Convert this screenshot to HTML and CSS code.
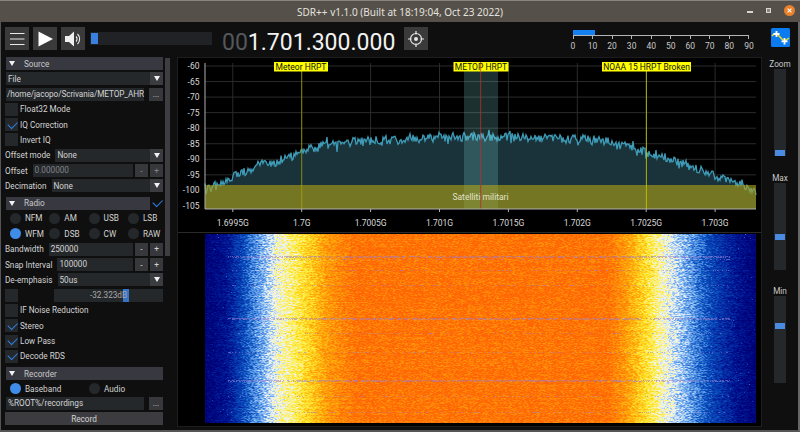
FILE: index.html
```html
<!DOCTYPE html>
<html lang="en">
<head>
<meta charset="utf-8">
<title>SDR++</title>
<link rel="stylesheet" href="styles.css">
</head>
<body>
<div class="window">
  <header class="titlebar">
    <span class="title">SDR++ v1.1.0 (Built at 18:19:04, Oct 23 2022)</span>
    <div class="winbtns">
      <span class="win-min"></span>
      <span class="win-max"></span>
      <span class="win-close"><svg viewBox="0 0 11 11" width="11" height="11"><path d="M3.6 3.6l3.8 3.8M7.4 3.6l-3.8 3.8" stroke="#fff" stroke-width="1.1"/></svg></span>
    </div>
  </header>
  <div class="toolbar">
    <button class="tbtn"><svg viewBox="0 0 24 24" width="24" height="24"><path d="M5 6.5h14.5M5 12h14.5M5 17.5h14.5" stroke="#e8e8e8" stroke-width="1.2" fill="none"/></svg></button>
    <button class="tbtn"><svg viewBox="0 0 24 24" width="24" height="24"><path d="M5.5 4.5L20 12 5.500 19.500Z" fill="#fff"/></svg></button>
    <button class="tbtn"><svg viewBox="0 0 24 24" width="24" height="24"><path d="M4 9h4l5-4.500v15L8 15H4Z" fill="#f0f0f0"/><path d="M15 9.500a3.500 3.500 0 0 1 0 5M16.500 7a7 7 0 0 1 0 10" stroke="#f0f0f0" stroke-width="1.100" fill="none"/></svg></button>
    <div class="volume"><span class="volume-grab"></span></div>
    <div class="freq"><span class="freq-dim">00</span>1.701.300.000</div>
    <button class="tbtn tune"><svg viewBox="0 0 24 24" width="24" height="24"><circle cx="12" cy="12" r="5.500" stroke="#e8e8e8" stroke-width="1.200" fill="none"/><circle cx="12" cy="12" r="2" fill="#e8e8e8"/><path d="M12 4v3.500M12 16.500V20M4 12h3.500M16.500 12H20" stroke="#e8e8e8" stroke-width="1.200"/></svg></button>
    <div class="meter">
      <div class="meter-bar"></div>
      <div class="scale">
        <div class="tick"><i></i><b>0</b></div>
        <div class="tick"><i></i><b>10</b></div>
        <div class="tick"><i></i><b>20</b></div>
        <div class="tick"><i></i><b>30</b></div>
        <div class="tick"><i></i><b>40</b></div>
        <div class="tick"><i></i><b>50</b></div>
        <div class="tick"><i></i><b>60</b></div>
        <div class="tick"><i></i><b>70</b></div>
        <div class="tick"><i></i><b>80</b></div>
        <div class="tick"><i></i><b>90</b></div>
      </div>
    </div>
    <div class="logo"><svg viewBox="0 0 19 19" width="19" height="19"><rect width="19" height="19" rx="1.500" fill="#0a7cf0"/><path d="M1 8c3-4 5-3 8 1s5 5 9 1" stroke="#f0d820" stroke-width="1.500" fill="none"/><path d="M5.500 3v6M2.500 6h6M13.500 10v6.500M10.500 13.300h6" stroke="#fff" stroke-width="1.800"/></svg></div>
  </div>
  <main class="main">
    <aside class="side">
      <div class="menu">
        <div class="head"><span class="tri"></span>Source</div>
        <div class="row"><div class="combo">File<span class="arrow"></span></div></div>
        <div class="row"><div class="input path">/home/jacopo/Scrivania/METOP_AHR</div><span class="btn dots">...</span></div>
        <div class="row"><span class="check"></span><span class="lbl">Float32 Mode</span></div>
        <div class="row"><span class="check on"></span><span class="lbl">IQ Correction</span></div>
        <div class="row"><span class="check"></span><span class="lbl">Invert IQ</span></div>
        <div class="row"><span class="key">Offset mode</span><div class="combo">None<span class="arrow"></span></div></div>
        <div class="row"><span class="key">Offset</span><div class="input dim">0.000000</div><span class="btn dim">-</span><span class="btn dim">+</span></div>
        <div class="row"><span class="key">Decimation</span><div class="combo">None<span class="arrow"></span></div></div>
        <div class="head radio-head"><div class="head-main"><span class="tri"></span>Radio</div><span class="check on bare"></span></div>
        <div class="radios">
          <span class="radio">NFM</span><span class="radio">AM</span><span class="radio">USB</span><span class="radio">LSB</span>
          <span class="radio on">WFM</span><span class="radio">DSB</span><span class="radio">CW</span><span class="radio">RAW</span>
        </div>
        <div class="row"><span class="key">Bandwidth</span><div class="input">250000</div><span class="btn">-</span><span class="btn">+</span></div>
        <div class="row"><span class="key">Snap Interval</span><div class="input">100000</div><span class="btn">-</span><span class="btn">+</span></div>
        <div class="row"><span class="key">De-emphasis</span><div class="combo">50us<span class="arrow"></span></div></div>
        <div class="row"><span class="check"></span><div class="squelch"><span class="squelch-text">-32.323dB</span><span class="squelch-grab"></span></div></div>
        <div class="row"><span class="check"></span><span class="lbl">IF Noise Reduction</span></div>
        <div class="row"><span class="check on"></span><span class="lbl">Stereo</span></div>
        <div class="row"><span class="check on"></span><span class="lbl">Low Pass</span></div>
        <div class="row"><span class="check on"></span><span class="lbl">Decode RDS</span></div>
        <div class="head sect"><span class="tri"></span>Recorder</div>
        <div class="radios two">
          <span class="radio on">Baseband</span><span class="radio">Audio</span>
        </div>
        <div class="row"><div class="input">%ROOT%/recordings</div><span class="btn dots">...</span></div>
        <div class="row"><span class="btn wide">Record</span></div>
      </div>
      <div class="scrollbar"><span class="thumb"></span></div>
    </aside>
    <section class="display">
      <svg id="spectrum" class="spectrum" viewBox="178 58 583 174" width="583" height="174"></svg>
      <div class="divider"></div>
      <div class="fall-wrap"><canvas id="fall" class="fall" width="551" height="189"></canvas></div>
    </section>
    <aside class="sliders">
      <div class="vs"><span class="vs-label">Zoom</span><div class="vs-track"><span class="vs-grab g-zoom"></span></div></div>
      <div class="vs"><span class="vs-label">Max</span><div class="vs-track"><span class="vs-grab g-max"></span></div></div>
      <div class="vs"><span class="vs-label">Min</span><div class="vs-track"><span class="vs-grab g-min"></span></div></div>
    </aside>
  </main>
</div>
<script src="script.js"></script>
</body>
</html>
```
FILE: styles.css
```css
* { box-sizing: border-box; }
html, body { margin: 0; padding: 0; background: #0f0f0f; }
body { width: 800px; height: 432px; overflow: hidden; font-family: Roboto, "Liberation Sans", sans-serif; font-size: 8.200px; color: #d4d4d4; }
.window { width: 800px; height: 432px; display: flex; flex-direction: column; background: #0f0f0f; border-left: 1px solid #555; border-right: 2px solid #666; border-bottom: 2px solid #555; }
.titlebar { height: 22px; flex: none; background: #55504a; border-top: 1px solid #8a8580; display: flex; align-items: center; justify-content: center; position: relative; margin: 0 -2px 0 -1px; }
.title { font-family: "Noto Sans", sans-serif; font-size: 10px; color: #e4e2df; }
.winbtns { position: absolute; right: 5px; top: 4px; display: flex; align-items: center; gap: 13px; }
.win-min { width: 6px; height: 1.500px; background: #d8d6d2; margin-top: 3px; }
.win-max { width: 5px; height: 5px; border: 1px solid #d8d6d2; background: #8a8680; }
.win-close { width: 11px; height: 11px; border-radius: 50%; background: #e8812c; display: flex; }
.toolbar { height: 34px; flex: none; display: flex; align-items: flex-start; padding: 5px 0 0 4px; }
.tbtn { width: 24px; height: 23px; padding: 0; margin: 0 4px 0 0; border: 0; background: #3a3a3a; display: flex; align-items: center; justify-content: center; }
.volume { width: 122px; height: 13px; margin: 5px 0 0 1px; background: #202226; }
.volume-grab { display: block; width: 7px; height: 11px; margin: 1px 0 0 1px; background: #3a80e0; }
.freq { width: 182px; margin: 2px 0 0 10px; font-size: 23px; line-height: 27px; color: #f2f2f2; white-space: nowrap; }
.freq-dim { color: #55585a; }
.tune { margin: 0; }
.meter { width: 176px; margin-left: 145px; position: relative; padding-top: 8px; }
.meter-bar { position: absolute; left: 0; top: 3px; width: 22px; height: 5px; background: #1580f0; }
.scale { display: flex; justify-content: space-between; border-top: 1px solid #b5b5b5; }
.tick { width: 0; display: flex; flex-direction: column; align-items: center; }
.tick i { width: 1px; height: 3px; flex: none; background: #b5b5b5; }
.tick b { font-weight: 400; font-size: 8.500px; line-height: 12px; margin-top: 1px; color: #c8c8c8; }
.logo { margin: 1px 0 0 22px; height: 19px; }
.main { flex: 1; min-height: 0; display: flex; padding-top: 1px; }
.side { width: 175px; flex: none; display: flex; padding-left: 4px; }
.menu { width: 158px; flex: none; display: flex; flex-direction: column; }
.row { height: 13px; margin-bottom: 2.300px; display: flex; align-items: center; gap: 2px; flex: none; white-space: nowrap; }
.head { height: 13px; margin-bottom: 2.300px; background: #383840; display: flex; align-items: center; flex: none; color: #c8c8c8; margin-left: 1px; }
.tri { width: 0; height: 0; border-left: 3.500px solid transparent; border-right: 3.500px solid transparent; border-top: 5px solid #f2f2f2; margin: 0 9px 0 3px; }
.radio-head { background: none; margin-top: 2.200px; }
.head-main { flex: 1; height: 13px; background: #383840; display: flex; align-items: center; }
.sect { margin-top: 2px; }
.combo { flex: 1; height: 13px; background: #25282b; display: flex; align-items: center; justify-content: space-between; padding-left: 2px; margin-left: 1px; }
.arrow { width: 13px; height: 13px; background: #3a3c40; position: relative; display: flex; align-items: center; justify-content: center; }
.arrow::after { content: ""; border-left: 3.500px solid transparent; border-right: 3.500px solid transparent; border-top: 5px solid #f2f2f2; }
.input { flex: 1; min-width: 0; height: 13px; background: #25282b; padding-left: 2px; margin-left: 1px; line-height: 13px; overflow: hidden; }
.path { letter-spacing: -0.080px; padding-left: 1px; }
.dim { color: #808488; }
.btn { width: 13px; height: 13px; background: #36383c; display: flex; align-items: center; justify-content: center; flex: none; }
.dots { margin-left: 3px; width: 14px; }
.wide { width: 100%; background: #3c3c40; }
.check { width: 13px; height: 13px; background: #25282b; flex: none; position: relative; }
.bare { background: none; margin-left: 0; }
.on.check::after { content: ""; position: absolute; left: 2.500px; top: 2.500px; width: 8px; height: 4.500px; border-left: 1.700px solid #2e82e8; border-bottom: 1.700px solid #2e82e8; transform: rotate(-45deg); }
.lbl { margin-left: 0; }
.key { flex: none; margin-right: 2px; }
.radios { display: grid; grid-template-columns: repeat(4, 39.300px); padding-left: 5px; row-gap: 2.600px; margin-bottom: 3px; }
.two { grid-template-columns: 79px 79px; margin-bottom: 2px; }
.radio { height: 12.500px; display: flex; align-items: center; gap: 4px; }
.radio::before { content: ""; width: 11px; height: 11px; border-radius: 50%; background: #25282b; flex: none; }
.radio.on::before { background: #3f8ce8; }
.squelch { flex: 1; height: 13px; margin-left: 34px; background: #25282b; position: relative; display: flex; justify-content: center; line-height: 13px; color: #a8a8a8; }
.squelch-grab { position: absolute; left: 69px; top: 0; width: 6px; height: 13px; background: #3a80e0; opacity: .85; }
.squelch-text { position: relative; z-index: 1; }
.scrollbar { width: 6px; margin: 1px 0 0 2px; height: 198px; flex: none; }
.thumb { display: block; width: 5px; height: 198px; background: #3e3e42; }
.display { width: 585px; height: 370px; flex: none; background: #000; border: 1px solid #1d1d1d; margin-left: 1px; display: flex; flex-direction: column; }
.spectrum { display: block; flex: none; }
.spectrum text { font-family: Roboto, "Liberation Sans", sans-serif; font-size: 8.500px; fill: #d8d8d8; }
.spectrum .mark { fill: #111; font-size: 8.500px; }
.divider { height: 1px; flex: none; background: #2a2a2a; margin-bottom: 1px; }
.fall-wrap { padding-left: 27px; flex: 1; }
.fall { display: block; }
.sliders { flex: 1; display: flex; flex-direction: column; align-items: center; padding-top: 0; }
.vs { display: flex; flex-direction: column; align-items: center; height: 113.500px; }
.vs-label { line-height: 12px; color: #c8c8c8; height: 12px; margin-top: 1px; margin-bottom: -1px; }
.vs-track { width: 12px; height: 87px; margin-top: 0; background: #25282b; position: relative; }
.vs-grab { position: absolute; left: 1px; width: 10px; height: 6px; background: #4a8ae0; }
.g-zoom { top: 81px; }
.g-max { top: 51px; }
.g-min { top: 27px; }
```
FILE: script.js
```js
(function () {
  var seed = 12345;
  function rnd() { seed = (seed * 1664525 + 1013904223) >>> 0; return seed / 4294967296; }
  function lerp(tbl, x) {
    for (var i = 1; i < tbl.length; i++) {
      if (x <= tbl[i][0]) {
        var a = tbl[i - 1], b = tbl[i];
        return a[1] + (b[1] - a[1]) * (x - a[0]) / (b[0] - a[0]);
      }
    }
    return tbl[tbl.length - 1][1];
  }
  var NS = "http://www.w3.org/2000/svg";
  var svg = document.getElementById("spectrum");
  function el(name, attrs, text) {
    var e = document.createElementNS(NS, name);
    for (var k in attrs) e.setAttribute(k, attrs[k]);
    if (text) e.textContent = text;
    svg.appendChild(e);
    return e;
  }
  var L = 205, R = 756, T = 63, B = 209;
  var dbs = [-60, -65, -70, -75, -80, -85, -90, -95, -100, -105];
  dbs.forEach(function (d, i) {
    var y = 66 + i * 15.55;
    el("line", { x1: L, x2: R, y1: y, y2: y, stroke: "#2b2b2b" });
    el("text", { x: 199.5, y: y + 3, "text-anchor": "end" }, String(d));
  });
  var xs = ["1.6995G", "1.7G", "1.7005G", "1.701G", "1.7015G", "1.702G", "1.7025G", "1.703G"];
  xs.forEach(function (s, i) {
    var x = 232.8 + i * 68.9;
    el("line", { x1: x, x2: x, y1: T, y2: B, stroke: "#2b2b2b" });
    el("line", { x1: x, x2: x, y1: B, y2: B + 3, stroke: "#b0b0b0" });
    el("text", { x: x, y: 226, "text-anchor": "middle" }, s);
  });

  var env = [[205, 191], [215, 186], [230, 178], [245, 171], [260, 165], [275, 162], [290, 157], [310, 149], [330, 144], [350, 142], [370, 141], [440, 137], [480, 137], [540, 138], [600, 140], [620, 145], [646, 152], [665, 157], [680, 162], [700, 170], [720, 177], [740, 183], [750, 189], [756, 193]];
  var pts = [];
  for (var x = L; x <= R; x += 1) {
    var y = lerp(env, x) + (rnd() - 0.5) * 9;
    if (rnd() < 0.07) y -= 4 * rnd() + 1;
    if (rnd() < 0.05) y += 4 * rnd() + 1;
    pts.push(x + " " + y.toFixed(1));
  }
  el("path", { d: "M" + L + " " + B + "L" + pts.join("L") + "L" + R + " " + B + "Z", fill: "#1a3239" });
  el("path", { d: "M" + pts.join("L"), fill: "none", stroke: "#3f9cb8", "stroke-width": 1.3 });
  el("rect", { x: 464, y: T, width: 34, height: B - T, fill: "#7fdcdc", "fill-opacity": 0.22 });
  el("rect", { x: L, y: 185, width: R - L, height: B - 185, fill: "#ac9f18", "fill-opacity": 0.62 });
  el("line", { x1: 301.7, x2: 301.7, y1: 71, y2: B, stroke: "#a8a800", "stroke-opacity": 0.75 });
  el("line", { x1: 646.4, x2: 646.4, y1: 71, y2: B, stroke: "#c8c800", "stroke-opacity": 0.85 });
  el("line", { x1: 480.7, x2: 480.7, y1: T, y2: B, stroke: "#b03030", "stroke-opacity": 0.85 });
  el("line", { x1: L, x2: L, y1: T, y2: B, stroke: "#b0b0b0" });
  el("line", { x1: L, x2: R, y1: B, y2: B, stroke: "#b0b0b0" });
  [["Meteor HRPT", 274, 54], ["METOP HRPT", 453.500, 55], ["NOAA 15 HRPT Broken", 602, 89]].forEach(function (m) {
    el("rect", { x: m[1], y: 62, width: m[2], height: 9.500, fill: "#ffff00" });
    el("text", { x: m[1] + m[2] / 2, y: 69.800, "text-anchor": "middle", "class": "mark" }, m[0]);
  });
  el("line", { x1: 480.7, x2: 480.7, y1: 62, y2: 71.500, stroke: "#b03030", "stroke-opacity": 0.7 });
  el("text", { x: 480.5, y: 200, "text-anchor": "middle", style: "fill:#e2e2c8" }, "Satelliti militari");

  // Waterfall
  var cv = document.getElementById("fall"), ctx = cv.getContext("2d");
  var W = cv.width, H = cv.height, img = ctx.createImageData(W, H);
  var lvl = [[0, 0.0], [20, 0.08], [32, 0.2], [45, 0.33], [60, 0.45], [72, 0.55], [90, 0.63], [105, 0.72], [122, 0.84], [150, 0.94], [402, 0.94], [420, 0.84], [438, 0.7], [458, 0.56], [482, 0.42], [510, 0.22], [533, 0.08], [551, 0.0]];
  var stops = [[0, 0, 0, 115], [0.12, 0, 20, 145], [0.3, 10, 80, 190], [0.44, 110, 170, 240], [0.55, 240, 245, 245], [0.68, 255, 235, 50], [0.82, 255, 170, 10], [1, 255, 100, 5]];
  function cmap(v) {
    v = Math.max(0, Math.min(1, v));
    for (var i = 1; i < stops.length; i++) {
      if (v <= stops[i][0]) {
        var a = stops[i - 1], b = stops[i], t = (v - a[0]) / (b[0] - a[0]);
        return [a[1] + (b[1] - a[1]) * t, a[2] + (b[2] - a[2]) * t, a[3] + (b[3] - a[3]) * t];
      }
    }
    return stops[stops.length - 1].slice(1);
  }
  var feature = {};
  [[22, 1], [23, 0.8], [25, 0.3], [36, 0.3], [51, 0.3], [84, 1], [85, 0.8], [99, 0.3], [118, 0.35], [146, 1], [147, 0.8], [162, 0.3], [178, 0.35]].forEach(function (f) { feature[f[0]] = f[1]; });
  for (var yy = 0; yy < H; yy++) {
    var rowShift = (rnd() - 0.5) * 0.03;
    var fs = feature[yy] || 0;
    var prev = 0;
    for (var xx = 0; xx < W; xx++) {
      var n = (rnd() - 0.5) * 0.2;
      var v = lerp(lvl, xx) + rowShift + (n + prev) * 0.5 + 0.02;
      prev = n;
      if (rnd() < 0.004 && v < 0.15) v += 0.2;
      var c = cmap(v);
      if (fs && xx > 22 && xx < 525 && rnd() < 0.65 * fs) {
        c = [c[0] * 0.45 + 85, c[1] * 0.45 + 70, c[2] * 0.45 + 115];
      }
      var p = (yy * W + xx) * 4;
      img.data[p] = c[0]; img.data[p + 1] = c[1]; img.data[p + 2] = c[2]; img.data[p + 3] = 255;
    }
  }
  ctx.putImageData(img, 0, 0);
})();
```
